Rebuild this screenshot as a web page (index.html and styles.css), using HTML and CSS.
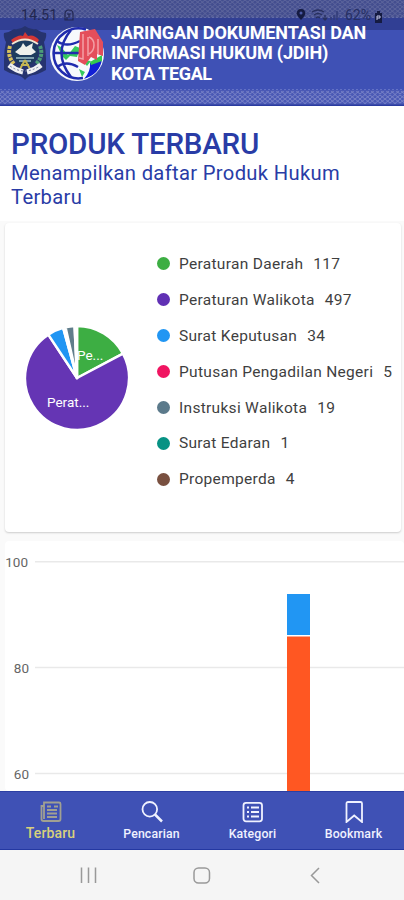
FILE: index.html
```html
<!DOCTYPE html>
<html lang="id">
<head>
<meta charset="utf-8">
<title>JDIH Kota Tegal</title>
<link rel="stylesheet" href="styles.css">
</head>
<body>
<div class="app">
  <header class="header">
    <svg class="pattern" width="404" height="106" viewBox="0 0 404 106" aria-hidden="true">
      <defs>
        <pattern id="batik" width="10" height="9" patternUnits="userSpaceOnUse">
          <path d="M0 0L5 4.5L10 0M0 9L5 4.5L10 9M0 5L5 9L10 5M0 4L5 0L10 4" fill="none" stroke="#b9bce0" stroke-width=".8"/>
        </pattern>
      </defs>
      <rect width="404" height="18" fill="#5d68ae"/>
      <rect width="404" height="17" fill="url(#batik)" opacity=".5"/>
      <path d="M0 17.5H404M0 90H404" stroke="#8792d5" stroke-dasharray="2 2"/>
      <rect y="90" width="404" height="15" fill="#4b59b5"/>
      <rect y="91" width="404" height="13" fill="url(#batik)" opacity=".5"/>
      <path d="M0 105.2H404" stroke="#2b3c9f" stroke-width="1.4"/>
    </svg>
    <div class="status">
      <span class="clock">14.51</span>
      <svg class="lock" width="12" height="14" viewBox="0 0 12 14"><path d="M2 12V6q0-4 4-4t4 4v6zM4 6h4M6 6v4M4 12V9" fill="none" stroke="#222750" stroke-width="1.2"/></svg>
      <svg class="signals" width="43" height="14" viewBox="0 0 43 14">
        <path d="M5 1C2 1 .7 3 .7 5.300C.7 8 5 12 5 12S9.300 8 9.300 5.300C9.300 3 8 1 5 1Z" fill="#151b42"/><circle cx="5" cy="5" r="1.500" fill="#4b59a7"/>
        <path d="M16 4q6-4 12 0M18 7q4-3 8 0M20 10q2-2 4 0M29 7v5M27 10l2 2l2-2" fill="none" stroke="#28305f" stroke-width="1.300"/>
        <path d="M35 12V9M38 12V7M41 12V3" stroke="#323c78" stroke-width="1.500"/>
      </svg>
      <span class="percent">62%</span>
      <svg class="battery" width="9" height="12" viewBox="0 0 9 12"><path d="M3 0h3v2h2v10H1V2h2z" fill="#151b42"/><path d="M3 9V5h3v2H3" fill="none" stroke="#c4c8e8"/></svg>
    </div>
    <div class="brand">
      <svg class="crest" width="46" height="56" viewBox="0 0 46 56">
        <path d="M2 7Q8 6 12 3Q18 4 23 0Q28 4 34 3Q38 6 44 7Q45 11 42 16Q44 24 44 33V44Q35 49 31 49Q26 50 23 54Q20 50 15 49Q8 48 2 44V33Q2 24 4 16Q1 11 2 7Z" fill="#26336f"/>
        <circle cx="23" cy="26" r="13" fill="#1d3c5e"/>
        <path d="M8 20Q5 30 12 38" fill="none" stroke="#d8c25a" stroke-width="4" stroke-dasharray="3 1"/>
        <path d="M38 20Q42 30 34 38" fill="none" stroke="#4c9c78" stroke-width="4" stroke-dasharray="3 1"/>
        <path d="M9 14Q17 8 21 10L23 6L26 10Q32 8 37 14L35 17Q23 11 11 17Z" fill="#d43735"/>
        <path d="M10 18Q23 9 36 18" fill="none" stroke="#f0e8d4" stroke-width="1.800"/>
        <path d="M13 26L19 21L21 17L24 21L31 17L30 22L34 26L29 29L18 29Z" fill="#eef0ec"/>
        <path d="M14 32H32M17 35H29" stroke="#9fc0c7" stroke-width="1.300"/>
        <path d="M23 34L18 43M23 34L28 43M19 39H27" fill="none" stroke="#c4b554" stroke-width="2"/>
        <path d="M7 39Q13 44 21 46M25 46Q33 44 39 39" fill="none" stroke="#eff0f3" stroke-width="5"/>
        <path d="M8 40Q22 50 38 40" fill="none" stroke="#777e9b" stroke-width="1" stroke-dasharray="2 2"/>
      </svg>
      <svg class="globe" width="58" height="58" viewBox="0 0 58 58">
        <circle cx="29" cy="29" r="27" fill="#f7f9fc"/>
        <path d="M9 20L13 22L20 30L27 21L32 23L29 32L22 31L18 35L14 31Z M34 35L43 36L39 41ZM31 44L37 47L34 52Z" fill="#35c95e"/>
        <path d="M38 4.500A25 25 0 1 0 35 53" fill="none" stroke="#202cae" stroke-width="2.600"/>
        <path d="M23 5Q4 28 23 52M9 16Q18 23 32 16M5 28H32M9 42Q18 35 30 42" fill="none" stroke="#202cae" stroke-width="2.500"/>
        <path d="M42 38L54 34Q52 49 36 54Q43 46 42 38Z" fill="#1220d5"/>
        <path d="M42 37L54 30V36L43 40Z" fill="#35c94f"/>
        <path d="M32 7L47 4L55 17V31L49 29V35L43 32L37 40L30 36Z" fill="#e44e5b"/>
        <path d="M35 9V34L31 33M40 12V31M41 12Q46 14 46 20T41 29M50 14V29" fill="none" stroke="#f3a0a7" stroke-width="1.500"/>
      </svg>
      <h1 class="brand-name"><span class="name-one">JARINGAN DOKUMENTASI DAN</span><span class="name-two">INFORMASI HUKUM (JDIH)</span><span class="name-three">KOTA TEGAL</span></h1>
    </div>
  </header>

  <section class="intro">
    <h2>PRODUK TERBARU</h2>
    <p>Menampilkan daftar Produk Hukum<br>Terbaru</p>
  </section>

  <main class="content">
    <section class="card summary">
      <svg class="pie" width="104" height="104" viewBox="0 0 104 104">
        <g stroke="#fff" stroke-width="2.500" stroke-linejoin="round">
          <path fill="#3dae43" d="M52 52V0A52 52 0 0 1 98 27.700Z"/>
          <path fill="#6535b4" d="M52 52L98 27.700A52 52 0 1 1 23.300 8.600Z"/>
          <path fill="#2196f3" d="M52 52L23.300 8.600A52 52 0 0 1 38.200 1.870Z"/>
          <path fill="#fff" d="M52 52L38.200 1.870A52 52 0 0 1 40.500 1.300Z"/>
          <path fill="#607d8b" d="M52 52L40.500 1.300A52 52 0 0 1 49.600 .06Z"/>
          <path fill="#fff" d="M52 52L49.600 .06A52 52 0 0 1 52 0Z"/>
        </g>
        <text x="52" y="34">Pe...</text><text x="22" y="81">Perat...</text>
      </svg>
      <ul class="legend">
        <li><i class="green"></i>Peraturan Daerah<b>117</b></li>
        <li><i class="purple"></i>Peraturan Walikota<b>497</b></li>
        <li><i class="blue"></i>Surat Keputusan<b>34</b></li>
        <li><i class="pink"></i>Putusan Pengadilan Negeri<b>5</b></li>
        <li><i class="slate"></i>Instruksi Walikota<b>19</b></li>
        <li><i class="teal"></i>Surat Edaran<b>1</b></li>
        <li><i class="brown"></i>Propemperda<b>4</b></li>
      </ul>
    </section>
    <section class="card chart">
      <svg width="399" height="250" viewBox="0 0 399 250">
        <path d="M30 20.800H399M30 126.500H399M30 232.500H399" stroke="#e9e9e9" stroke-width="1.500"/>
        <g text-anchor="end"><text x="23" y="25.500">100</text><text x="24" y="131.500">80</text><text x="24" y="237.500">60</text></g>
        <path d="M282 53h23v41h-23z" fill="#2196f3"/>
        <path d="M282 95.500h23V250h-23z" fill="#ff5722"/>
      </svg>
    </section>
  </main>

  <nav class="tabs">
    <a class="tab active">
      <svg width="22" height="22" viewBox="0 0 22 22"><path d="M4 1.500H19Q20.500 1.500 20.500 3V18Q20.500 20 18.500 20H3.500Q1.500 20 1.500 18V5H4Z M4 5V18M7 5.500H11M14 5.500H18M7 9H17M7 12.500H17M7 16H17"/></svg>
      <span>Terbaru</span>
    </a>
    <a class="tab">
      <svg width="22" height="22" viewBox="0 0 22 22"><circle cx="8.800" cy="8.300" r="7.300"/><path d="M14 13.500L21 20.500" stroke-width="2.500"/></svg>
      <span>Pencarian</span>
    </a>
    <a class="tab">
      <svg width="22" height="22" viewBox="0 0 22 22"><rect x="1.500" y="1.800" width="18.500" height="18.500" rx="2.500"/><path d="M5 6.500H7M9 6.500H17M5 11H7M9 11H17M5 15.500H7M9 15.500H17"/></svg>
      <span>Kategori</span>
    </a>
    <a class="tab">
      <svg width="22" height="22" viewBox="0 0 22 22"><path d="M5 1H17.500Q19 1 19 2.500V21L11.200 14.500L3.500 21V2.500Q3.500 1 5 1Z"/></svg>
      <span>Bookmark</span>
    </a>
  </nav>
  <footer class="system">
    <svg width="404" height="50" viewBox="0 0 404 50"><path d="M81.500 17.500V33M88.500 17.500V33M95.500 17.500V33M319 18L311.500 25.500L319 33"/><rect x="194" y="18" width="15.500" height="15" rx="4.500"/></svg>
  </footer>
</div>
</body>
</html>
```
FILE: styles.css
```css
* { box-sizing: border-box; }
body { margin: 0; font-family: Roboto, sans-serif; background: #fff; }
.app { width: 404px; height: 900px; display: flex; flex-direction: column; overflow: hidden; }
.header { position: relative; height: 106px; flex: none; background: #3f51b5; }
.pattern { position: absolute; top: 0; left: 0; }
.status { position: absolute; top: 0; left: 0; width: 404px; height: 30px; display: flex; align-items: center; padding-left: 21px; background: rgba(24, 32, 86, .35); color: #222750; font-size: 14px; }
.clock { width: 36px; letter-spacing: .3px; }
.lock { margin-left: 6px; }
.signals { margin-left: 221px; }
.percent { margin-left: 6px; width: 28px; color: #262f63; font-size: 14px; }
.battery { margin-left: 1px; margin-top: 4px; }
.brand { position: relative; display: flex; padding-top: 24px; }
.crest { margin: 2px 0 0 2px; }
.globe { margin: 1px 0 0 0; }
.brand-name { display: flex; flex-direction: column; margin: -1px 0 0 5px; color: #fff; font-size: 18px; line-height: 20.3px; font-weight: 700; white-space: nowrap; }
.brand-name span { display: block; }
.name-one { letter-spacing: -.13px; }
.name-two { letter-spacing: -.18px; }
.name-three { letter-spacing: -.4px; }
.intro { height: 115px; flex: none; padding: 22px 11px 0; color: #293ca6; }
.intro h2 { margin: 0; font-size: 29.5px; line-height: 33px; font-weight: 500; letter-spacing: -.2px; }
.intro p { margin: 0; font-size: 20.2px; line-height: 24px; letter-spacing: .33px; }
.content { height: 570px; flex: none; padding: 2px 0 0 5px; background: #fafafa; overflow: hidden; }
.card { background: #fff; border-radius: 4px; }
.summary { width: 396px; height: 309px; display: flex; box-shadow: 0 1px 2px #ccc; }
.pie { margin: 103px 0 0 20px; flex: none; }
.pie text { fill: #fff; font-size: 13.5px; }
.legend { list-style: none; margin: 23px 0 0 28px; padding: 0; font-size: 15.5px; color: #3f3f3f; letter-spacing: .3px; }
.legend li { display: flex; align-items: center; height: 35.9px; white-space: nowrap; }
.legend i { width: 13px; height: 13px; margin-right: 9px; border-radius: 50%; }
.legend b { margin-left: 10px; font-weight: 400; }
.green { background: #3dae43; }
.purple { background: #6030b4; }
.blue { background: #2196f3; }
.pink { background: #f01561; }
.slate { background: #5b7a8b; }
.teal { background: #079284; }
.brown { background: #795040; }
.chart { width: 399px; height: 250px; margin-top: 9px; }
.chart svg { display: block; }
.chart text { fill: #666; font-size: 13.5px; }
.tabs { height: 59px; flex: none; display: grid; grid-template-columns: repeat(4, 1fr); background: #3f51b5; border-top: 1px solid #2c3fa3; border-bottom: 1px solid #2438a2; }
.tab { display: flex; flex-direction: column; align-items: center; padding-top: 9px; color: #f0f2ff; font-size: 12.3px; line-height: 15px; font-weight: 500; letter-spacing: .15px; }
.tab svg { fill: none; stroke: currentColor; stroke-width: 1.8; }
.tab span { margin-top: 4px; }
.active { color: #d8d07c; font-size: 14px; }
.active svg { stroke: #a1a092; }
.active span { margin-top: 3px; }
.system { height: 50px; background: #f5f5f5; }
.system svg { display: block; fill: none; stroke: #999; stroke-width: 1.5; }
```
